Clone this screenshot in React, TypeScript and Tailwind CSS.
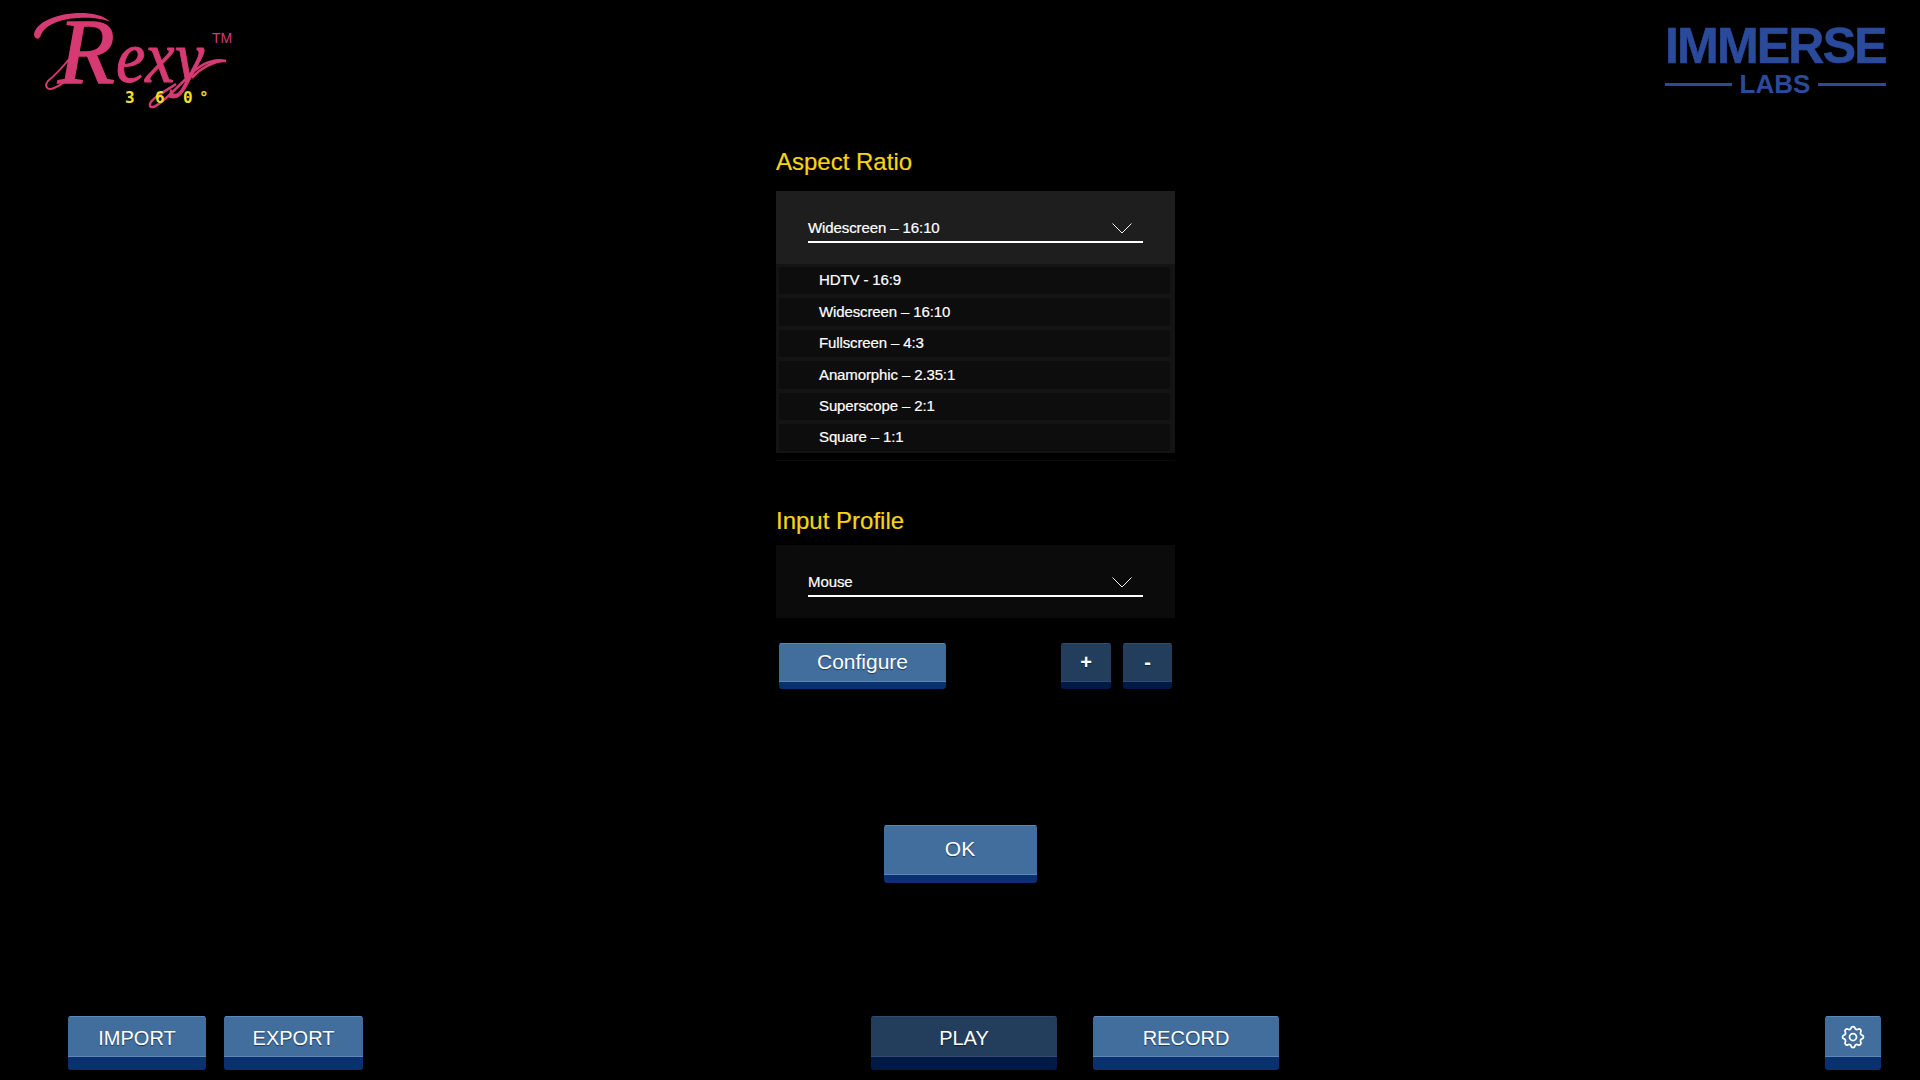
import { HiOutlineCog } from "react-icons/hi";

const aspectOptions = [
  "HDTV - 16:9",
  "Widescreen – 16:10",
  "Fullscreen – 4:3",
  "Anamorphic – 2.35:1",
  "Superscope – 2:1",
  "Square – 1:1",
];

const Chevron = () => (
  <svg width="20" height="11" viewBox="0 0 20 11" fill="none" className="mr-[11px] mb-[1px]">
    <path d="M0.5 0.5 L10 10 L19.5 0.5" stroke="#f2f2f2" strokeWidth="1" />
  </svg>
);

const SelectBox = ({ value, bg }: { value: string; bg: string }) => (
  <div className={`h-[73px] px-[32px] pt-[28px] ${bg}`}>
    <div className="h-[24px] flex items-center justify-between border-b-2 border-white text-[15px] tracking-[-0.1px] text-white pb-[3px] [-webkit-text-stroke:0.2px_#fff]">
      <span>{value}</span>
      <Chevron />
    </div>
  </div>
);

const GameButton = ({
  children,
  className,
  dark,
  shelf,
  inner = "",
}: {
  children: React.ReactNode;
  className: string;
  dark?: boolean;
  shelf: string;
  inner?: string;
}) => (
  <button
    className={`flex flex-col rounded-[3px] overflow-hidden text-white [text-shadow:0_1px_1px_rgba(0,0,0,0.5)] ${className} ${
      dark ? "bg-[#001a45]" : "bg-[#0b3070]"
    }`}
  >
    <span
      className={`flex w-full flex-1 items-center justify-center border-t border-b ${inner} ${
        dark ? "bg-[#233d5c] border-[#2f4d70]" : "bg-[#426e9e] border-[#5c88b6]"
      }`}
    >
      {children}
    </span>
    <span className={`block w-full ${shelf}`} />
  </button>
);

const RexyLogo = () => (
  <svg width="240" height="115" viewBox="0 0 240 115" fill="none">
    <text
      x="58"
      y="83"
      fontFamily="'Liberation Serif', serif"
      fontStyle="italic"
      fontSize="93"
      stroke="#d63a72"
      strokeWidth="1.5"
      fill="#d63a72"
    >
      R
    </text>
    <text
      x="116"
      y="82"
      fontFamily="'Liberation Serif', serif"
      fontStyle="italic"
      fontSize="74"
      textLength="88"
      lengthAdjust="spacingAndGlyphs"
      stroke="#d63a72"
      strokeWidth="1"
      fill="#d63a72"
    >
      exy
    </text>
    {/* swashes */}
    <path
      d="M34 34 C36 22 58 13 80 13 C92 13 104 15 110 22 C104 19 92 17 78 18 C60 19 45 25 41 35 C39 41 34 39 34 34 Z"
      fill="#d63a72"
    />
    <path
      d="M70 58 C62 68 54 76 48 81 C44 86 47 91 54 88 C62 85 70 78 76 68"
      stroke="#d63a72"
      strokeWidth="2"
    />
    <path
      d="M176 84 C164 92 148 100 150 106 C154 112 172 92 187 78 C198 66 212 58 226 61 C216 60 200 68 192 78"
      stroke="#d63a72"
      strokeWidth="2.5"
    />
    <text x="212" y="43" fontFamily="'Liberation Sans', sans-serif" fontSize="14" fill="#d63a72">
      TM
    </text>
    <text
      x="125 155 183 199"
      y="103"
      fontFamily="'DejaVu Sans Mono', monospace"
      fontWeight="700"
      fontSize="16"
      fill="#f2e02a"
    >
      360°
    </text>
  </svg>
);

const ImmerseLogo = () => (
  <div className="flex w-[221px] flex-col text-[#2a4a9c] font-bold">
    <div className="text-[50px] leading-[44px] tracking-[-1.8px] whitespace-nowrap [-webkit-text-stroke:0.6px_#2a4a9c]">
      IMMERSE
    </div>
    <div className="flex items-center justify-between mt-[3px]">
      <div className="h-[3px] w-[67px] bg-[#2a4a9c]" />
      <div className="text-[26px] leading-[26px]">LABS</div>
      <div className="h-[3px] w-[68px] bg-[#2a4a9c]" />
    </div>
  </div>
);

const App = () => {
  return (
    <div className="flex h-screen w-full flex-col overflow-hidden bg-black font-['Liberation_Sans',sans-serif]">
      {/* logos */}
      <div className="h-[148px] flex items-start justify-between pr-[34px]">
        <RexyLogo />
        <div className="pt-[24px]">
          <ImmerseLogo />
        </div>
      </div>

      {/* settings column */}
      <div className="ml-[776px] w-[399px] flex flex-col">
        <h2 className="text-[24px] leading-[28px] text-[#f5d515] mb-[15px] [-webkit-text-stroke:0.2px_#f5d515]">
          Aspect Ratio
        </h2>
        <SelectBox value="Widescreen – 16:10" bg="bg-[#1e1e1e]" />
        <div className="h-[189px] flex flex-col gap-[4px] bg-[#141414] p-[3px] pr-[5px]">
          {aspectOptions.map((item) => (
            <div
              key={item}
              className="flex h-[27.4px] shrink-0 items-center rounded-[2px] bg-[#0d0d0d] pl-[40px] text-[15px] tracking-[-0.12px] text-white [-webkit-text-stroke:0.2px_#fff]"
            >
              {item}
            </div>
          ))}
        </div>
        <div className="mt-[7px] h-px bg-[#0a0a0a]" />

        <h2 className="text-[24px] leading-[28px] text-[#f5d515] mt-[46px] mb-[10px] [-webkit-text-stroke:0.2px_#f5d515]">
          Input Profile
        </h2>
        <SelectBox value="Mouse" bg="bg-[#0b0b0b]" />

        <div className="mt-[25px] flex pl-[3px]">
          <GameButton className="w-[167px] h-[46px] text-[21px]" inner="pb-[2px]" shelf="h-[7px]">
            Configure
          </GameButton>
          <GameButton className="ml-[115px] w-[50px] h-[46px] text-[20px] font-bold" inner="pb-[2px]" dark shelf="h-[7px]">
            +
          </GameButton>
          <GameButton className="ml-[12px] w-[49px] h-[46px] text-[20px] font-bold" inner="pb-[2px]" dark shelf="h-[7px]">
            -
          </GameButton>
        </div>
      </div>

      <GameButton className="mt-[136px] self-center w-[153px] h-[58px] text-[21px]" inner="pb-[2px]" shelf="h-[8px]">
        OK
      </GameButton>

      {/* bottom toolbar */}
      <div className="mt-[133px] flex pl-[68px] pr-[39px]">
        <GameButton className="w-[138px] h-[54px] text-[20px]" inner="pt-[2px]" shelf="h-[13px]">
          IMPORT
        </GameButton>
        <GameButton className="ml-[18px] w-[139px] h-[54px] text-[20px]" inner="pt-[2px]" shelf="h-[13px]">
          EXPORT
        </GameButton>
        <GameButton className="ml-[508px] w-[186px] h-[54px] text-[20px]" inner="pt-[2px]" dark shelf="h-[13px]">
          PLAY
        </GameButton>
        <GameButton className="ml-[36px] w-[186px] h-[54px] text-[20px]" inner="pt-[2px]" shelf="h-[13px]">
          RECORD
        </GameButton>
        <GameButton className="ml-auto w-[56px] h-[54px]" shelf="h-[13px]">
          <HiOutlineCog size={28} strokeWidth={1.5} />
        </GameButton>
      </div>
    </div>
  );
};

export default App;
